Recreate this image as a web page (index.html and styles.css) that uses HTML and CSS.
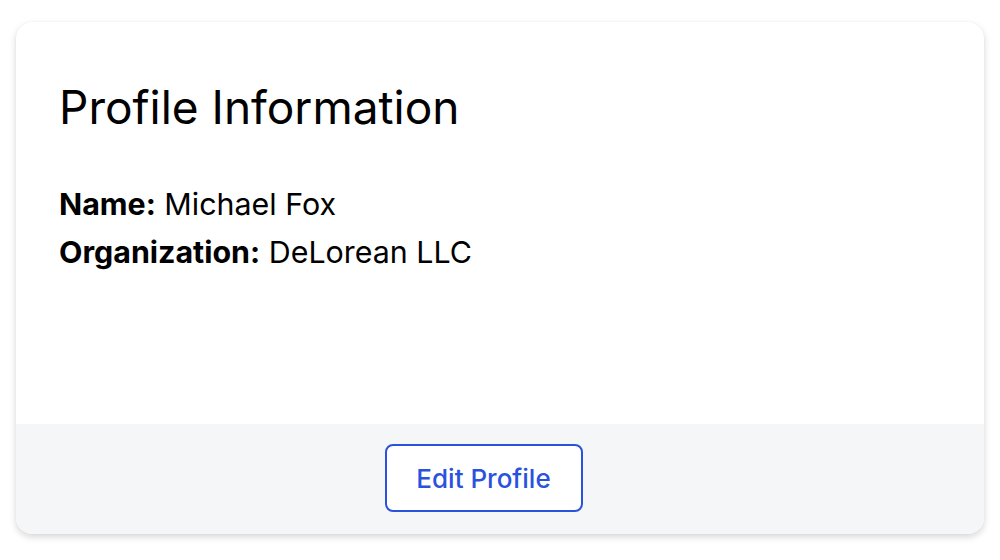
FILE: index.html
```html
<!DOCTYPE html>
<html lang="en">
<head>
<meta charset="utf-8">
<link rel="stylesheet" href="styles.css">
</head>
<body>
<div class="card">
  <div class="card-body">
    <h1 class="title">Profile Information</h1>
    <p class="row"><strong>Name:</strong> Michael Fox</p>
    <p class="row"><strong>Organization:</strong> DeLorean LLC</p>
  </div>
  <div class="card-footer">
    <button class="btn">Edit Profile</button>
  </div>
</div>
</body>
</html>
```
FILE: styles.css
```css
html, body { margin: 0; padding: 0; background: #ffffff; }
body {
  font-family: "Inter", "Lato", sans-serif;
  color: #000000;
  padding: 22px 16px 26px 16px;
  min-height: 512px;
}
.card {
  width: 968px;
  height: 512px;
  border-radius: 16px;
  background: #ffffff;
  box-shadow: 0 3px 7px rgba(0,0,0,0.16), 0 0 1px rgba(0,0,0,0.08);
  display: flex;
  flex-direction: column;
  overflow: hidden;
}
.card-body {
  flex: 1;
  padding: 57px 43px 0 43px;
}
.title {
  margin: 0 0 45px 0;
  font-size: 46px;
  font-weight: 400;
  line-height: 56px;
  letter-spacing: 0;
}
.row {
  margin: 0;
  font-size: 30.4px;
  line-height: 48px;
}
.row strong { font-weight: 700; }
.card-footer {
  height: 110px;
  background: #f5f6f8;
  display: flex;
  align-items: center;
  justify-content: center;
  padding-right: 33px;
}
.btn {
  width: 198px;
  height: 68px;
  border: 2px solid #2a52dc;
  border-radius: 8px;
  background: #ffffff;
  color: #2a52dc;
  font-family: inherit;
  font-size: 26px;
  font-weight: 500;
  margin-top: -2px;
}
```
